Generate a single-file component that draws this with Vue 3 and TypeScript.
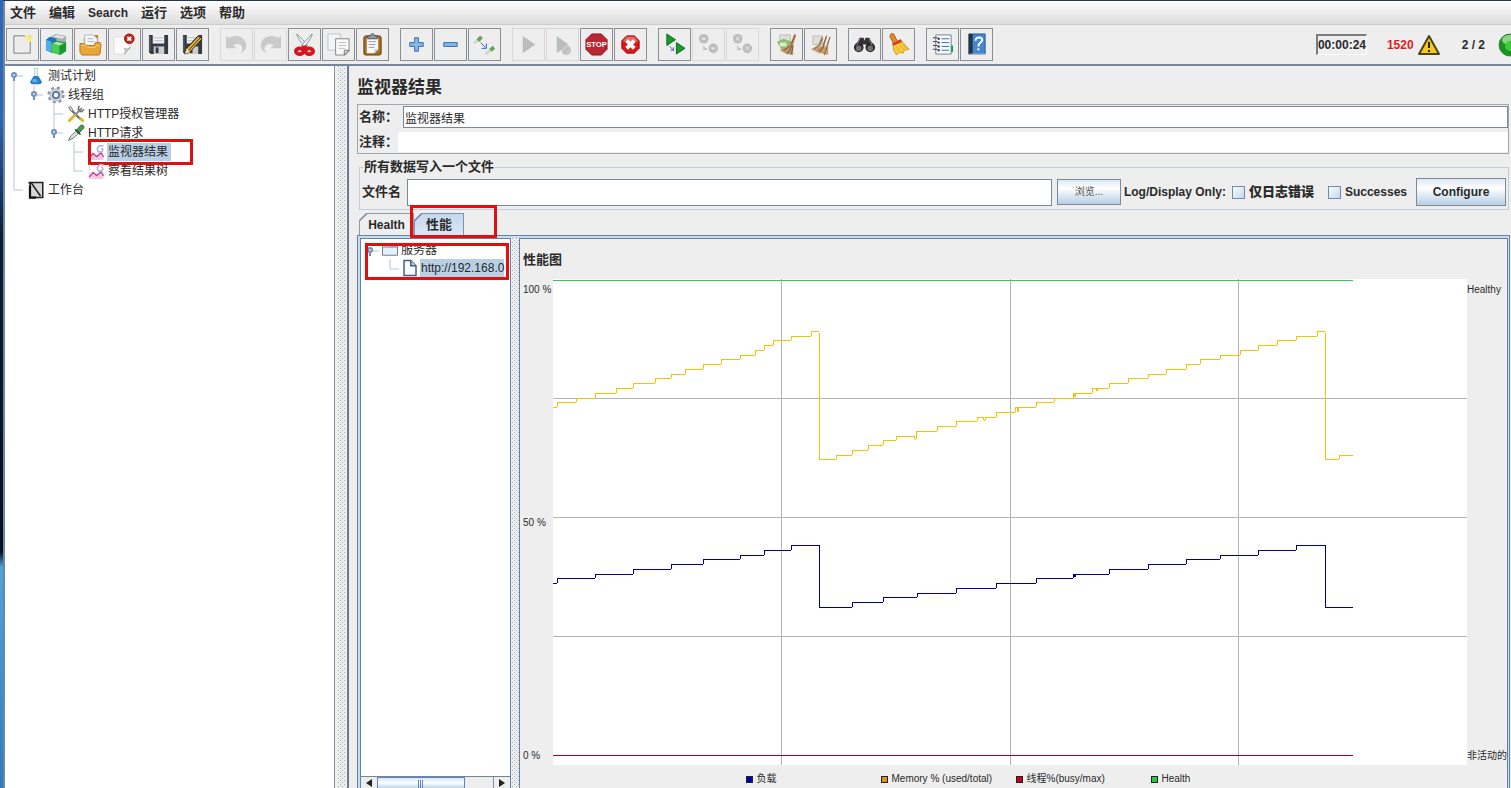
<script setup lang="ts">
import { ref } from 'vue'

interface ToolButton { id: string; label: string; disabled?: boolean }
type Guide = '' | 'v' | 't' | 'l' | 'h' | 'hu' | 'hd'
interface TreeRow { text: string; icon: string; guides: Guide[]; selected?: boolean; marked?: boolean }

const menus: string[] = ['文件', '编辑', 'Search', '运行', '选项', '帮助']

const toolGroups: ToolButton[][] = [
  [
    { id: 'new', label: '新建' }, { id: 'templates', label: '模板' }, { id: 'open', label: '打开' },
    { id: 'close', label: '关闭' }, { id: 'save', label: '保存' }, { id: 'saveAs', label: '另存为' },
  ],
  [
    { id: 'undo', label: '撤销', disabled: true }, { id: 'redo', label: '重做', disabled: true },
    { id: 'cut', label: '剪切' }, { id: 'copy', label: '复制' }, { id: 'paste', label: '粘贴' },
  ],
  [{ id: 'plus', label: '展开' }, { id: 'minus', label: '折叠' }, { id: 'toggle', label: '切换' }],
  [
    { id: 'start', label: '启动', disabled: true }, { id: 'startNow', label: '不停顿启动', disabled: true },
    { id: 'stop', label: '停止' }, { id: 'shutdown', label: '关闭线程' },
  ],
  [
    { id: 'remoteStart', label: '远程启动' }, { id: 'remoteStop', label: '远程停止', disabled: true },
    { id: 'remoteShutdown', label: '远程关闭', disabled: true },
  ],
  [{ id: 'clear', label: '清除' }, { id: 'clearAll', label: '清除全部' }],
  [{ id: 'search', label: '查找' }, { id: 'resetSearch', label: '重置查找' }],
  [{ id: 'functions', label: '函数助手' }, { id: 'help', label: '帮助主题' }],
]

const floppy =
  '<path d="M2 2h20v20H4l-2-2z" fill="#343a42"/><rect x="6" y="2" width="12" height="9" fill="#eef0f2"/><path d="M7 5h10M7 8h10" stroke="#b9bfc7"/><rect x="7" y="14" width="11" height="8" fill="#c9cdd2"/><rect x="9" y="15" width="3" height="6" fill="#343a42"/><path d="M3 3v16" stroke="#66707c"/>'
const redBadge = (cx: number, cy: number, r: number): string =>
  `<circle cx="${cx}" cy="${cy}" r="${r}" fill="#c4251d" stroke="#8f150f"/><path d="M${cx - 2} ${cy - 2}l4 4m0-4l-4 4" stroke="#fff" stroke-width="2"/>`

const icons: Record<string, string> = {
  new: '<path d="M3 3h17v18H3z" fill="#f2f3ef" stroke="#74767a"/><path d="M5 5h13v14H5z" fill="#ececec"/><path d="M19 1l1 3 3 0-2 3 1 3-4-2-3 1 1-4-2-3h4z" fill="#f7ee7e"/>',
  templates: '<path d="M6 4l5-3 11 2v13l-6 3-10-2z" fill="#a8adb2"/><path d="M8 4l4-2 9 2-3 2z" fill="#e6e8ea"/><path d="M1 7l4-3 7 2v13l-4 2-7-3z" fill="#1d73c0"/><path d="M1 7l6 2v11l-6-2z" fill="#53aeea"/><path d="M7 11l4-3 11 2v9l-6 4-9-3z" fill="#159a2f"/><path d="M7 11l8 2v10l-8-3z" fill="#47ce50"/><path d="M8 11l4-2 8 2-5 2z" fill="#b0e7ad"/>',
  open: '<path d="M5 10V5h4l2-3h9v9" fill="#cc8620"/><path d="M6 2h9l4 4v9H6z" fill="#f7f8fb" stroke="#b5bac4"/><path d="M9 6h6M9 9h7" stroke="#a4adc0"/><path d="M1 11h4l3 2h8l1-3h5l1 2-1 9-1 2H3l-2-3z" fill="#e8a636" stroke="#b67718"/><path d="M2 13h5l2 2h8l1-2h4" stroke="#f8cd74" fill="none"/>',
  close: '<path d="M1 4h16v12l-5 6H1z" fill="#fcfcfc" stroke="#dcdcdc"/><path d="M12 22c1-2 1-4 0-6 2 1 4 1 6-1z" fill="#d4d4d4" stroke="#aaa"/>' + redBadge(17, 6, 5),
  save: floppy,
  saveAs: floppy + '<path d="M4 22l2-6L18 3l4 3L9 20z" fill="#e7b23a" stroke="#3b3020"/><path d="M6 16L18 3M8 18L20 5" stroke="#332c20"/><path d="M4 22l2-6 3 4z" fill="#f5dfb5"/>',
  undo: '<path d="M1 3l3 2c8-4 17-1 18 7 1 5-3 8-6 9 3-3 3-8-1-9-3-1-5 0-6 1l3 3H1z" fill="#cacaca"/>',
  redo: '<path d="M23 3l-3 2C12 1 3 4 2 12c-1 5 3 8 6 9-3-3-3-8 1-9 3-1 5 0 6 1l-3 3h11z" fill="#cacaca"/>',
  cut: '<path d="M4 1c0 3 5 10 9 14l2-2C12 9 7 4 4 1z" fill="#f0f4f4" stroke="#7b9290"/><path d="M20 1c0 3-5 10-9 14l-2-2C12 9 17 4 20 1z" fill="#f0f4f4" stroke="#7b9290"/><ellipse cx="7" cy="19" rx="4" ry="3" fill="#f3c8c8" stroke="#cf1822" stroke-width="4"/><ellipse cx="17" cy="19" rx="4" ry="3" fill="#f3c8c8" stroke="#cf1822" stroke-width="4"/><path d="M9 13h6l-1 5h-4z" fill="#cf1822"/>',
  copy: '<path d="M1 1h13v17H1z" fill="#f3f3f3" stroke="#c2c2c2"/><path d="M9 6h14v13l-4 4H9z" fill="#fafafa" stroke="#858585"/><path d="M12 10h8M12 13h8M12 16h7" stroke="#bdbdbd"/><path d="M18 23v-5h5z" fill="#ddd" stroke="#777"/>',
  paste: '<rect x="3" y="3" width="18" height="20" rx="2" fill="#a76c20" stroke="#65400f"/><path d="M6 5h12v12l-4 4H6z" fill="#f7f8fb"/><path d="M8 9h8M8 12h7M8 15h6" stroke="#8f98ad"/><path d="M14 21v-4h4z" fill="#c8ccd5"/><path d="M7 6V3h3c0-3 4-3 4 0h3v3z" fill="#999da2" stroke="#494c50"/>',
  plus: '<path d="M10 5h4v5h5v4h-5v5h-4v-5H5v-4h5z" fill="#85b9ea" stroke="#3a68a8"/>',
  minus: '<path d="M5 10h14v4H5z" fill="#85b9ea" stroke="#3a68a8"/>',
  toggle: '<path d="M1 11l8-7" stroke="#d5d5d5" stroke-width="3"/><path d="M5 8l4-4" stroke="#71a459" stroke-width="4"/><path d="M13 22l9-7" stroke="#d5d5d5" stroke-width="3"/><path d="M18 18l4-3" stroke="#71a459" stroke-width="4"/><path d="M8 10l5 5m-4 1h5v-5" fill="none" stroke="#2464bd"/>',
  start: '<path d="M6 3l13 9-13 9z" fill="#b9bdbd"/>',
  startNow: '<path d="M6 3l12 9-12 9z" fill="#b9bdbd"/><circle cx="16" cy="18" r="5" fill="#c6c6c6"/><path d="M13 21l6-6" stroke="#b0b0b0"/>',
  stop: '<path d="M7 1h10l6 6v10l-6 6H7l-6-6V7z" fill="#bb2731" stroke="#87141d"/><text x="12" y="15" text-anchor="middle" font-size="8" font-weight="700" fill="#fff" font-family="Liberation Sans, sans-serif">STOP</text>',
  shutdown: '<path d="M8 3h8l5 5v8l-5 5H8l-5-5V8z" fill="#dd1717" stroke="#8e0d0d"/><path d="M8 4h8l4 5H4z" fill="#e96c68"/><path d="M8 8l8 8m0-8l-8 8" stroke="#fff" stroke-width="4"/>',
  remoteStart: '<path d="M4 1l9 6-9 6z" fill="#1d992b" stroke="#08711b"/><path d="M14 10l9 6-9 6z" fill="#1d992b" stroke="#08711b"/><path d="M7 14l4 4m-3 0h3v-3" stroke="#684eae" fill="none"/>',
  remoteStop: '<circle cx="7" cy="6" r="5" fill="#bdbdbd"/><circle cx="17" cy="16" r="5" fill="#bdbdbd"/><path d="M5 6h4M15 16h4" stroke="#e9e9e9" stroke-width="2"/><path d="M6 14l4 3h-4" stroke="#aaa" fill="none"/>',
  remoteShutdown: '<circle cx="7" cy="6" r="5" fill="#bdbdbd"/><circle cx="17" cy="16" r="5" fill="#bdbdbd"/><path d="M5 4l4 4m0-4l-4 4M15 14l4 4m0-4l-4 4" stroke="#eee"/><path d="M6 14l4 3h-4" stroke="#aaa" fill="none"/>',
  clear: '<path d="M5 2h11v8H5z" fill="#dedfd9" stroke="#bbb"/><path d="M2 9l7-3 9 3-2 6-9 3z" fill="#8dbd72"/><path d="M5 10h7v4H5z" fill="#dcead0"/><path d="M20 1l2 1-3 10v11l-7-1-7-4 8-4 5-6z" fill="#bd976a"/><path d="M17 13l-8 5m9-5l-5 9m6-9l-2 9" stroke="#765331"/><path d="M21 2l-4 10" stroke="#a8683a" stroke-width="2"/>',
  clearAll: '<path d="M4 3h10v9H4z" fill="#dedfd9" stroke="#bbb"/><path d="M13 4l2 1-3 8v9l-10-5 7-4z" fill="#c6a378"/><path d="M18 2l1 1-3 10 1 10-9-5 6-5z" fill="#b98d5f"/><path d="M22 3v1l-2 9v10l-8-3 6-7z" fill="#c89f70"/><path d="M10 13l-5 4m11-4l-5 7m8-6l-3 9M14 5l-3 8m7-9l-3 9m7-9l-3 9" stroke="#805d39"/>',
  search: '<path d="M7 5h4l1 3 1-3h4l6 11H14v-4h-4v4H1z" fill="#343438"/><circle cx="6" cy="15" r="5" fill="#29292d"/><circle cx="18" cy="15" r="5" fill="#29292d"/><circle cx="6" cy="16" r="3" fill="#77706a"/><circle cx="18" cy="16" r="3" fill="#77706a"/><path d="M7 6L4 13M17 6l3 7" stroke="#8e8e92"/>',
  resetSearch: '<path d="M4 1c2-1 4 0 4 2l3 6-4 2-4-7z" fill="#e08a30" stroke="#a8601c"/><path d="M6 10l8-3 9 10-5 1-1 3-4-1-3 3-3-5z" fill="#f7cd3a" stroke="#d19a20"/><path d="M6 12l9-4" stroke="#cd3f2c" stroke-width="3"/><path d="M10 14l3 5m0-7l5 6m-2-7l4 5" stroke="#e0a826"/>',
  functions: '<path d="M5 2h16v20H5z" fill="#f8faff" stroke="#777f8b"/><path d="M11 6h8M11 10h8M11 14h8M11 18h8" stroke="#2d6fb7"/><path d="M7 6h2M7 10h2M7 14h2M7 18h2" stroke="#222" stroke-width="2"/><path d="M2 5h5M2 9h5M2 13h5M2 17h5" stroke="#39424c"/><path d="M22 13v7" stroke="#1ca044" stroke-width="2"/>',
  help: '<path d="M4 1h17v21H4z" fill="#4387d3" stroke="#275a92"/><path d="M4 1h4v21H4z" fill="#26323f"/><path d="M5 22h16" stroke="#c9d2dc"/><path d="M11 8c0-5 8-4 7 0-1 2-4 2-4 6m0 2v2" fill="none" stroke="#fff" stroke-width="2"/>',
  flask: '<path d="M9 2h6l-1 2v7l5 9-2 2H7l-2-2 5-9V4z" fill="#e9f2f9" stroke="#b5c9d7"/><path d="M9 12h6l5 8-2 3H6l-2-3z" fill="#2a80c7"/><path d="M8 16h4l2 4H7z" fill="#62b5ea"/>',
  gear: '<circle cx="12" cy="12" r="10" fill="none" stroke="#8b959f" stroke-width="3" stroke-dasharray="4 4"/><circle cx="12" cy="12" r="8" fill="#dce3e9" stroke="#8b959f"/><circle cx="12" cy="12" r="5" fill="#5c83ad" stroke="#3c5878"/><circle cx="12" cy="12" r="3" fill="#eef5ff"/>',
  tools: '<path d="M4 5l14 14" stroke="#6b6f70" stroke-width="3"/><path d="M2 3l3-1 3 5-2 2z" fill="#d6d9d9" stroke="#666"/><path d="M17 17l5 5" stroke="#d9b92a" stroke-width="4"/><path d="M20 4L10 14" stroke="#8d9294" stroke-width="3"/><path d="M11 13l-9 9" stroke="#d9b92a" stroke-width="4"/><path d="M16 1l-1 5 4 3 4-3" fill="none" stroke="#686d70" stroke-width="2"/>',
  dropper: '<path d="M2 22l3-6L16 6l3 3L8 19z" fill="#dce5df" stroke="#4d5b52"/><path d="M12 9l6-7c3-2 6 1 4 4l-7 7z" fill="#479956" stroke="#205c2d"/><path d="M11 7l7 7" stroke="#26462d" stroke-width="2"/>',
  chart: '<path d="M3 3v19h19" fill="none" stroke="#d9c4dc"/><path d="M3 21l5-7 5 4 5-4 4 8z" fill="#f9c6e0"/><path d="M3 20l5-6 5 4 6-5 3 6" fill="none" stroke="#c1459b" stroke-width="2"/><path d="M22 4c-7-3-11 5-6 8 5 1 7-4 3-5" fill="none" stroke="#aab0e6" stroke-width="2"/>',
  workbench: '<path d="M4 2h17v20H4z" fill="#d6d8d8" stroke="#222" stroke-width="2"/><path d="M2 2l4 1 12 17" fill="none" stroke="#202020" stroke-width="2"/><path d="M4 6v16h8" fill="none" stroke="#111" stroke-width="3"/>',
  folder: '<path d="M2 19V7l2-2h7l2 2h9v12z" fill="#e6f0fb" stroke="#455775"/><path d="M3 8h18" stroke="#8ba4c5" stroke-width="2"/>',
  file: '<path d="M4 2h9l7 7v13H4z" fill="#f7fbff" stroke="#455f8a" stroke-width="2"/><path d="M13 2v7h7" fill="#bcd3ed" stroke="#455f8a" stroke-width="2"/>',
}

const handle =
  '<path d="M12 10h6"/><circle cx="9" cy="9" r="2" fill="#dfeaf6" stroke="#6f8fbd" stroke-width="2"/><path d="M9 12v3" stroke="#6f8fbd" stroke-width="2"/>'
const guidePaths: Record<Guide, string> = {
  '': '',
  v: '<path d="M9 0v19"/>',
  t: '<path d="M9 0v19M9 10h9"/>',
  l: '<path d="M9 0v10h9"/>',
  h: handle,
  hd: '<path d="M9 14v5"/>' + handle,
  hu: '<path d="M9 0v6"/>' + handle,
}

const planTree: TreeRow[] = [
  { text: '测试计划', icon: 'flask', guides: ['hd'] },
  { text: '线程组', icon: 'gear', guides: ['v', 'hu'] },
  { text: 'HTTP授权管理器', icon: 'tools', guides: ['v', '', 't'] },
  { text: 'HTTP请求', icon: 'dropper', guides: ['v', '', 'hu'] },
  { text: '监视器结果', icon: 'chart', guides: ['v', '', '', 't'], selected: true, marked: true },
  { text: '察看结果树', icon: 'chart', guides: ['v', '', '', 'l'] },
  { text: '工作台', icon: 'workbench', guides: ['l'] },
]

const serverTree: TreeRow[] = [
  { text: '服务器', icon: 'folder', guides: ['h'] },
  { text: 'http://192.168.0', icon: 'file', guides: ['', 'l'], selected: true },
]

type Point = [number, number]
const CHART_W = 914
const CHART_H = 486

/* Each point starts a plateau that lasts until the next point. */
const memory: Point[] = [
  [0, 128], [5, 123], [24, 119], [43, 114], [64, 109], [81, 104], [103, 99], [119, 95], [133, 90], [151, 85],
  [169, 80], [188, 76], [203, 71], [212, 66], [221, 61], [239, 57], [259, 52], [266, 52], [267, 180], [284, 176],
  [300, 171], [316, 166], [331, 161], [344, 157], [362, 160], [364, 152], [385, 147], [404, 142], [425, 138],
  [431, 141], [433, 138], [444, 133], [463, 128], [465, 133], [466, 128], [484, 123], [502, 119], [521, 114],
  [522, 118], [523, 114], [540, 109], [544, 112], [545, 109], [557, 104], [576, 99], [596, 95], [614, 90],
  [634, 85], [648, 80], [668, 76], [688, 71], [706, 66], [725, 61], [744, 57], [765, 52], [772, 52], [773, 180],
  [787, 176], [800, 176],
]
const load: Point[] = [
  [0, 304], [5, 299], [43, 295], [81, 290], [119, 285], [151, 280], [188, 276], [212, 271], [239, 266], [266, 266],
  [267, 328], [300, 323], [331, 318], [365, 314], [404, 309], [444, 304], [484, 299], [521, 295], [522, 298],
  [523, 295], [557, 290], [596, 285], [634, 280], [668, 276], [706, 271], [744, 266], [772, 266], [773, 328],
  [800, 328],
]
const stepPath = (points: Point[]): string =>
  points.map(([x, y], i) => (i === 0 ? `M${x} ${y}` : `H${x - 1}L${x} ${y}`)).join('')

const series = [
  { color: '#33cc4c', d: 'M0 1H800' },
  { color: '#f2c500', d: stepPath(memory) },
  { color: '#000096', d: stepPath(load) },
  { color: '#b00020', d: 'M0 476H800' },
]
const gridX = [228, 457, 685]
const gridY = [119, 238, 357]

const legend = [
  { text: '负载', kind: 'load' },
  { text: 'Memory % (used/total)', kind: 'memory' },
  { text: '线程%(busy/max)', kind: 'busy' },
  { text: 'Health', kind: 'health' },
]

const name = ref('监视器结果')
const comment = ref('')
const fileName = ref('')
const errorsOnly = ref(false)
const successesOnly = ref(false)
</script>

<template>
  <div class="desktop">
    <div class="window">
      <nav class="menubar">
        <button v-for="m in menus" :key="m" type="button">{{ m }}</button>
      </nav>

      <div class="toolbar">
        <div v-for="(group, gi) in toolGroups" :key="gi" class="tool-group">
          <button
            v-for="b in group"
            :key="b.id"
            type="button"
            class="tool"
            :disabled="b.disabled"
            :aria-label="b.label"
          >
            <svg viewBox="0 0 24 24" fill="none" v-html="icons[b.id]"></svg>
          </button>
        </div>
        <div class="status">
          <span class="timer">00:00:24</span>
          <span class="errors">1520</span>
          <svg class="warn" viewBox="0 0 22 20">
            <path d="M11 1L21 19H1z" fill="#f4c81c" stroke="#4e4216" stroke-width="2" stroke-linejoin="round" />
            <path d="M11 7v6M11 15v2" stroke="#222" stroke-width="2" />
          </svg>
          <span class="threads">2 / 2</span>
          <span class="lamp">
            <svg viewBox="0 0 24 24">
              <circle cx="12" cy="12" r="11" fill="#199222" stroke="#477d46" />
              <ellipse cx="12" cy="7" rx="8" ry="5" fill="#8bd486" />
              <circle cx="12" cy="13" r="5" fill="#3fcb39" />
            </svg>
          </span>
        </div>
      </div>

      <div class="body">
        <aside class="plan">
          <div v-for="row in planTree" :key="row.text" class="row">
            <svg v-for="(g, i) in row.guides" :key="i" class="guide" viewBox="0 0 20 19" v-html="guidePaths[g]"></svg>
            <svg class="node-icon" viewBox="0 0 24 24" fill="none" v-html="icons[row.icon]"></svg>
            <span class="node-text" :class="{ selected: row.selected }">{{ row.text }}</span>
            <i v-if="row.marked" class="mark"></i>
          </div>
        </aside>

        <div class="splitter main-splitter"></div>

        <main class="panel">
          <h1>监视器结果</h1>
          <section class="naming">
            <div class="field">
              <label for="name">名称：</label>
              <input id="name" v-model="name" type="text" />
            </div>
            <div class="field">
              <label for="comment">注释：</label>
              <input id="comment" v-model="comment" class="plain" type="text" />
            </div>
          </section>

          <fieldset>
            <legend>所有数据写入一个文件</legend>
            <div class="file-row">
              <label for="file">文件名</label>
              <input id="file" v-model="fileName" type="text" />
              <button type="button" class="metal browse">浏览...</button>
              <span>Log/Display Only:</span>
              <label class="check"><input v-model="errorsOnly" type="checkbox" /><b>仅日志错误</b></label>
              <label class="check latin"><input v-model="successesOnly" type="checkbox" /><b>Successes</b></label>
              <button type="button" class="metal configure">Configure</button>
            </div>
          </fieldset>

          <div class="tabs" role="tablist">
            <button type="button" role="tab" class="tab" aria-selected="false">Health</button>
            <button type="button" role="tab" class="tab active" aria-selected="true">性能</button>
            <i class="mark"></i>
          </div>

          <div class="tab-body">
            <div class="servers">
              <div class="server-list">
                <div v-for="row in serverTree" :key="row.text" class="row">
                  <svg v-for="(g, i) in row.guides" :key="i" class="guide" viewBox="0 0 20 19" v-html="guidePaths[g]"></svg>
                  <svg class="node-icon" viewBox="0 0 24 24" fill="none" v-html="icons[row.icon]"></svg>
                  <span class="node-text" :class="{ selected: row.selected }">{{ row.text }}</span>
                </div>
                <i class="mark"></i>
              </div>
              <div class="scrollbar">
                <button type="button" aria-label="向左滚动">
                  <svg viewBox="0 0 6 8"><path d="M6 0v8L0 4z" fill="#222" /></svg>
                </button>
                <div class="track"><div class="thumb"><i></i></div></div>
                <button type="button" aria-label="向右滚动">
                  <svg viewBox="0 0 6 8"><path d="M0 0v8l6-4z" fill="#222" /></svg>
                </button>
              </div>
            </div>
            <div class="splitter inner-splitter"></div>
            <section class="performance">
              <h2>性能图</h2>
              <div class="plot">
                <div class="axis"><span>100 %</span><span>50 %</span><span>0 %</span></div>
                <svg class="chart" :viewBox="`0 0 ${CHART_W} ${CHART_H}`" preserveAspectRatio="none">
                  <path v-for="x in gridX" :key="'x' + x" class="grid" :d="`M${x} 0V${CHART_H}`" />
                  <path v-for="y in gridY" :key="'y' + y" class="grid" :d="`M0 ${y}H${CHART_W}`" />
                  <path v-for="s in series" :key="s.color" :d="s.d" :stroke="s.color" />
                </svg>
                <div class="axis right"><span>Healthy</span><span>非活动的</span></div>
              </div>
              <ul class="legend">
                <li v-for="l in legend" :key="l.kind"><i :class="l.kind"></i>{{ l.text }}</li>
              </ul>
            </section>
          </div>
        </main>
      </div>
    </div>
  </div>
</template>

<style>
body {
  margin: 0;
  overflow: hidden;
}
</style>

<style scoped>
* {
  box-sizing: border-box;
}
.desktop {
  height: 100vh;
  padding: 1px 0 0 3px;
  background: linear-gradient(90deg, transparent 3px, #27374e 3px),
    linear-gradient(#2c68b4 0, #2c68b4 15%, #0b1c36 30%, #06101f 70%, #4aa7dc 72%, #2c7cc0 100%);
  color: #2a2a2a;
  font: 12px/16px "Liberation Sans", "Noto Sans CJK SC", sans-serif;
}
button,
input {
  font: inherit;
  color: inherit;
}
.window {
  height: 100%;
  display: flex;
  flex-direction: column;
  background: #eee;
  border-left: 2px solid #73849f;
}
.menubar {
  height: 24px;
  flex: none;
  display: flex;
  align-items: center;
  gap: 13px;
  padding: 0 5px;
  background: linear-gradient(#fff, #dcdcdc);
  border-bottom: 1px solid #ccc;
}
.menubar button {
  border: 0;
  padding: 0;
  background: none;
  font-size: 13px;
  font-weight: 700;
}
.menubar button:nth-child(3) {
  font-size: 12px;
}
.toolbar {
  height: 39px;
  flex: none;
  display: flex;
  align-items: center;
  gap: 11px;
  padding-left: 1px;
  background: #eee;
}
.tool-group {
  display: flex;
  gap: 1px;
}
.tool {
  width: 33px;
  height: 33px;
  padding: 4px;
  border: 1px solid #8a8f96;
  background: #eee;
}
.tool:disabled {
  border-color: #d8d8d8;
}
.tool svg {
  display: block;
  width: 23px;
  height: 23px;
}
.status {
  margin-left: auto;
  display: flex;
  align-items: center;
  font-weight: 700;
}
.timer {
  width: 51px;
  height: 21px;
  line-height: 19px;
  border: 1px solid #fff;
  border-top: 2px solid #7c7c7c;
  border-left: 2px solid #7c7c7c;
  white-space: nowrap;
  text-align: center;
}
.errors {
  margin-left: 20px;
  color: #e01c24;
}
.warn {
  width: 22px;
  height: 20px;
  margin: 0 22px 0 4px;
}
.lamp {
  width: 13px;
  height: 24px;
  margin-left: 13px;
  overflow: hidden;
}
.lamp svg {
  display: block;
  width: 24px;
  height: 24px;
}
.body {
  flex: 1;
  min-height: 0;
  display: flex;
  border-top: 2px solid #77869e;
}
.plan {
  width: 330px;
  flex: none;
  background: #fff;
  border-right: 1px solid #8794a8;
}
.row {
  position: relative;
  height: 19px;
  display: flex;
  align-items: center;
}
.guide {
  width: 20px;
  height: 19px;
  flex: none;
  fill: none;
  stroke: #b4c4d8;
}
.node-icon {
  width: 20px;
  height: 18px;
  margin: 0 1px;
  flex: none;
}
.node-text {
  padding: 0 3px 0 1px;
  height: 18px;
  line-height: 19px;
  white-space: nowrap;
}
.selected {
  background: #b8cfe5;
}
.mark {
  position: absolute;
  border: 3px solid #e01010;
  pointer-events: none;
}
.plan .mark {
  left: 83px;
  top: -3px;
  width: 105px;
  height: 26px;
}
.splitter {
  flex: none;
  background-color: #eee;
  background-image: conic-gradient(at 1px 1px, transparent 75%, #a3abb6 0),
    conic-gradient(at 1px 1px, transparent 75%, #a3abb6 0);
  background-size: 4px 4px;
  background-position: 1px 0, 3px 2px;
}
.main-splitter {
  width: 12px;
  border-right: 2px solid #eee;
  border-left: 2px solid #eee;
}
.panel {
  flex: 1;
  min-width: 0;
  display: flex;
  flex-direction: column;
  border-left: 2px solid #6c7a92;
  padding: 11px 2px 0 8px;
}
h1 {
  margin: 0 0 5px;
  font-size: 17px;
  line-height: 22px;
}
.naming {
  display: flex;
  flex-direction: column;
  gap: 4px;
  padding: 1px 0 1px 1px;
  border: 1px solid #a0a6ae;
  font-size: 13px;
}
.field {
  display: flex;
  align-items: center;
}
.field label {
  width: 44px;
  font-weight: 700;
  line-height: 18px;
  white-space: nowrap;
}
.field:last-child label {
  width: 39px;
}
.field input,
.file-row > input {
  flex: 1;
  min-width: 0;
  height: 22px;
  padding: 0 1px;
  border: 1px solid #7d8792;
  background: #fff;
  font-size: 12px;
}
.field input.plain {
  height: 20px;
  border: 0;
}
fieldset {
  min-width: 0;
  margin: 5px 0 0 2px;
  padding: 3px 2px;
  border: 1px solid #c3cdd8;
}
legend {
  margin-left: 1px;
  padding: 0 1px;
  font-size: 13px;
  font-weight: 700;
}
.file-row {
  display: flex;
  align-items: center;
  font-weight: 700;
  white-space: nowrap;
}
.file-row > label:first-child {
  width: 45px;
  font-size: 13px;
}
.file-row > input {
  height: 27px;
}
.metal {
  height: 26px;
  border: 1px solid #7a8a99;
  background: linear-gradient(#dde8f3, #fff 35%, #dde8f3 65%, #b8cfe5);
}
.browse {
  width: 64px;
  margin: 0 3px 0 5px;
  font-size: 10px;
  font-weight: 400;
  color: #555;
}
.configure {
  width: 90px;
  height: 28px;
  margin-left: 9px;
  padding: 0;
}
.check {
  display: flex;
  align-items: center;
  gap: 4px;
  margin-left: 6px;
  font-size: 13px;
}
.check.latin {
  margin-left: 14px;
  font-size: 12px;
}
.check input {
  appearance: none;
  width: 13px;
  height: 13px;
  margin: 0;
  border: 1px solid #6f8bb0;
  background: linear-gradient(135deg, #f8fbff, #c6d8ec);
}
.tabs {
  position: relative;
  display: flex;
  padding: 3px 0 0 2px;
}
.tab {
  width: 55px;
  height: 22px;
  padding: 0;
  border: 1px solid #8b99aa;
  border-bottom: 0;
  background: linear-gradient(135deg, #8b99aa 5px, #eee 5px);
  clip-path: polygon(7px 0, 100% 0, 100% 100%, 0 100%, 0 7px);
  font-weight: 700;
}
.tab.active {
  width: 50px;
  background: linear-gradient(135deg, #7a94b6 5px, transparent 5px), linear-gradient(#c4d8ec, #dbe8f5);
  border-color: #7a94b6;
  font-size: 13px;
}
.tabs .mark {
  left: 53px;
  top: -5px;
  width: 87px;
  height: 33px;
  z-index: 1;
}
.tab-body {
  flex: 1;
  min-height: 0;
  display: flex;
  margin-right: -1px;
  border: 1px solid #6382a8;
  border-bottom: 0;
  padding: 2px 1px 0 2px;
  box-shadow: inset 0 0 0 2px #c8ddf2;
}
.servers {
  width: 151px;
  flex: none;
  display: flex;
  flex-direction: column;
  border: 1px solid #6382a8;
  border-bottom: 0;
  background: #fff;
}
.server-list {
  position: relative;
  flex: 1;
  padding-top: 2px;
}
.server-list .row {
  height: 18px;
  overflow: hidden;
}
.server-list .node-icon {
  width: 18px;
  margin-left: 0;
}
.server-list .node-text {
  padding-right: 0;
}
.server-list .mark {
  left: 4px;
  top: 4px;
  width: 144px;
  height: 37px;
}
.scrollbar {
  height: 12px;
  flex: none;
  display: flex;
  border-top: 1px solid #72839a;
}
.scrollbar button {
  width: 16px;
  padding: 1px 0 0;
  border: 0;
  background: #eee;
  line-height: 0;
}
.scrollbar button svg {
  width: 6px;
  height: 8px;
}
.track {
  flex: 1;
  background: #eee;
  border-right: 1px solid #8493a8;
}
.thumb {
  width: 76%;
  height: 100%;
  padding-top: 2px;
  border: 1px solid #6382bf;
  border-bottom: 0;
  background: linear-gradient(#d7e6f5, #fff 50%, #bdd3e9);
}
.thumb i {
  display: block;
  width: 6px;
  height: 8px;
  margin: 0 auto;
  background: repeating-linear-gradient(90deg, #6382bf 0 1px, transparent 1px 2px);
}
.inner-splitter {
  width: 8px;
}
.performance {
  flex: 1;
  min-width: 0;
  display: flex;
  flex-direction: column;
  border: 1px solid #6382a8;
  border-bottom: 0;
  background: #eee;
}
h2 {
  margin: 11px 0 9px 3px;
  font-size: 13px;
  line-height: 20px;
}
.plot {
  flex: 1;
  min-height: 0;
  display: flex;
}
.axis {
  width: 33px;
  flex: none;
  display: flex;
  flex-direction: column;
  justify-content: space-between;
  padding: 5px 0 3px 3px;
  font-size: 10px;
  line-height: 12px;
  white-space: nowrap;
}
.axis.right {
  width: 40px;
  padding-left: 0;
}
.chart {
  flex: 1;
  min-width: 0;
  height: 100%;
  background: #fff;
  fill: none;
  stroke-width: 1;
  shape-rendering: crispEdges;
}
.chart path {
  vector-effect: non-scaling-stroke;
}
.chart .grid {
  stroke: #b4b4b4;
}
.legend {
  display: grid;
  grid-template-columns: repeat(4, 135px);
  justify-content: center;
  height: 23px;
  flex: none;
  margin: 0;
  padding: 3px 0 0;
  list-style: none;
  font-size: 10px;
}
.legend li {
  display: flex;
  align-items: center;
  height: 22px;
  gap: 4px;
  padding-left: 2px;
  white-space: nowrap;
}
.legend i {
  width: 7px;
  height: 7px;
  border: 1px solid #222;
}
.legend .load {
  background: #0000b0;
}
.legend .memory {
  background: #d99024;
}
.legend .busy {
  background: #c00018;
}
.legend .health {
  background: #25c93a;
}
</style>
